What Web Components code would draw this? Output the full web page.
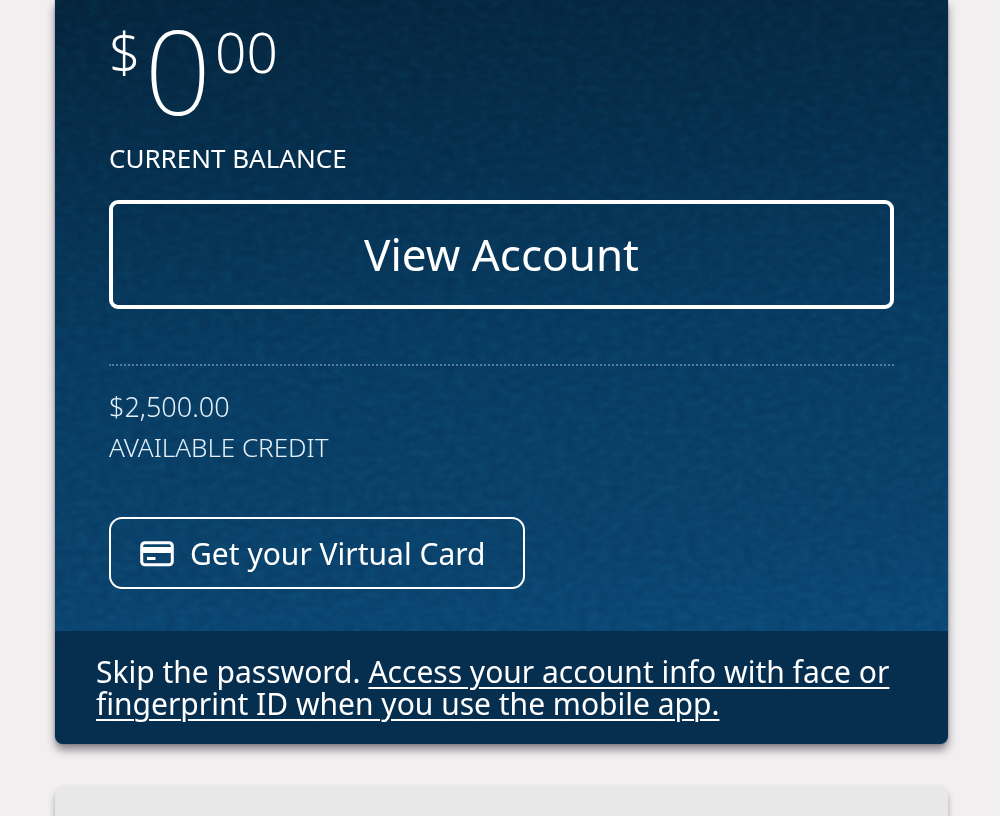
<!DOCTYPE html>
<html lang="en">
<head>
<meta charset="utf-8">
<meta name="viewport" content="width=device-width, initial-scale=1">
<title>Account summary</title>
<style>
  body { margin: 0; background: #f2eff1; color: #fff; font-family: "Noto Sans", "Open Sans", sans-serif; overflow-x: hidden; }
</style>
</head>
<body>
<account-page>
  <account-card>
    <balance-amount slot="balance" dollars="0" cents="00">CURRENT BALANCE</balance-amount>
    <outline-button slot="action">View Account</outline-button>
    <credit-line slot="credit" amount="$2,500.00">AVAILABLE CREDIT</credit-line>
    <virtual-card-button slot="extra">Get your Virtual Card</virtual-card-button>
    <promo-bar slot="promo" label="Access your account info with face or fingerprint ID when you use the mobile app.">Skip the password.</promo-bar>
  </account-card>
  <next-tile></next-tile>
</account-page>

<script>
class Base extends HTMLElement {
  constructor() {
    super();
    this.attachShadow({ mode: "open" }).innerHTML = this.markup();
  }
}

customElements.define("account-page", class extends Base {
  markup() { return `
    <style>
      :host { display: block; }
      main { display: flex; flex-direction: column; gap: 42px; padding: 0 52px 0 55px; height: 100vh; overflow: hidden; box-sizing: border-box; }
    </style>
    <main><slot></slot></main>`; }
});

customElements.define("account-card", class extends Base {
  markup() { return `
    <style>
      :host { display: block; flex: none; }
      article { position: relative; overflow: hidden; border-radius: 0 0 8px 8px; background: linear-gradient(176deg, #05263f 0, #06304f 22%, #083c62 45%, #0a436d 72%, #0b4a79 88%); }
      .shadow { border-radius: 0 0 8px 8px; box-shadow: 0 6px 9px rgba(40,32,40,.5), 0 0 2px rgba(40,60,80,.5); }
      .grain { position: absolute; inset: 0; width: 100%; height: 100%; opacity: .15; mix-blend-mode: soft-light; }
      .content { position: relative; padding: 24px 54px 42px; }
      hr { margin: 55px 0 0; border: 0; border-top: 2px dotted rgba(190,215,235,.42); }
    </style>
    <div class="shadow">
      <article>
        <svg class="grain" aria-hidden="true">
          <filter id="grain" x="0" y="0" width="100%" height="100%" color-interpolation-filters="sRGB"><feTurbulence type="fractalNoise" baseFrequency="0.09 0.14" numOctaves="2" seed="4"/><feColorMatrix values="1 0 0 0 0  1 0 0 0 0  1 0 0 0 0  0 0 0 0 1"/></filter>
          <rect width="100%" height="100%" filter="url(#grain)"/>
        </svg>
        <div class="content">
          <slot name="balance"></slot>
          <slot name="action"></slot>
          <hr>
          <slot name="credit"></slot>
          <slot name="extra"></slot>
        </div>
        <slot name="promo"></slot>
      </article>
    </div>`; }
});

customElements.define("balance-amount", class extends Base {
  markup() { return `
    <style>
      :host { display: block; }
      .amount { display: flex; align-items: flex-start; gap: 4px; height: 116px; font-weight: 200; }
      .small { font-size: 55px; line-height: 56px; font-weight: 300; }
      .big { font-size: 117px; line-height: 92px; }
      .label { font-size: 26px; line-height: 36px; }
    </style>
    <div class="amount"><span class="small">$</span><span class="big">${this.getAttribute("dollars")}</span><span class="small">${this.getAttribute("cents")}</span></div>
    <div class="label"><slot></slot></div>`; }
});

customElements.define("outline-button", class extends Base {
  markup() { return `
    <style>
      :host { display: block; margin-top: 24px; }
      button { display: block; width: 100%; padding: 18px; border: 4px solid #fff; border-radius: 9px; background: transparent; color: inherit; font: 400 44px/65px "Noto Sans", sans-serif; cursor: pointer; }
    </style>
    <button type="button"><slot></slot></button>`; }
});

customElements.define("credit-line", class extends Base {
  markup() { return `
    <style>
      :host { display: block; margin-top: 20px; font-size: 26px; line-height: 41px; font-weight: 300; color: #e4f0f8; }
      .amount { font-size: 27px; }
    </style>
    <div class="amount">${this.getAttribute("amount")}</div>
    <div><slot></slot></div>`; }
});

customElements.define("virtual-card-button", class extends Base {
  markup() { return `
    <style>
      :host { display: flex; margin-top: 49px; }
      button { display: flex; align-items: center; gap: 16px; padding: 14px 38px 13px 29px; border: 2px solid #fff; border-radius: 13px; background: transparent; color: inherit; font: 400 30px/41px "Noto Sans", sans-serif; cursor: pointer; }
      svg { flex: none; }
    </style>
    <button type="button">
      <svg width="34" height="26" viewBox="0 0 34 26" aria-hidden="true"><rect x="1.700" y="1.700" width="30.600" height="22.100" rx="3.200" fill="none" stroke="#fff" stroke-width="3"/><path d="M2 6h30v6H2zM7 16h8.500v3H7z" fill="#fff"/></svg>
      <span><slot></slot></span>
    </button>`; }
});

customElements.define("promo-bar", class extends Base {
  markup() { return `
    <style>
      :host { display: block; position: relative; padding: 25px 41px 24px; background: rgba(6,42,72,.86); font-size: 30px; line-height: 32px; }
      p { margin: 0; }
      a { color: inherit; text-decoration: underline; text-decoration-thickness: 2px; text-underline-offset: 4px; }
    </style>
    <p><slot></slot> <a href="#">${this.getAttribute("label")}</a></p>`; }
});

customElements.define("next-tile", class extends Base {
  markup() { return `
    <style>
      :host { display: block; flex: 1 0 80px; border-radius: 10px 10px 0 0; background: #e8e8e8; box-shadow: 0 4px 6px rgba(40,32,40,.35); }
    </style>`; }
});
</script>
</body>
</html>
